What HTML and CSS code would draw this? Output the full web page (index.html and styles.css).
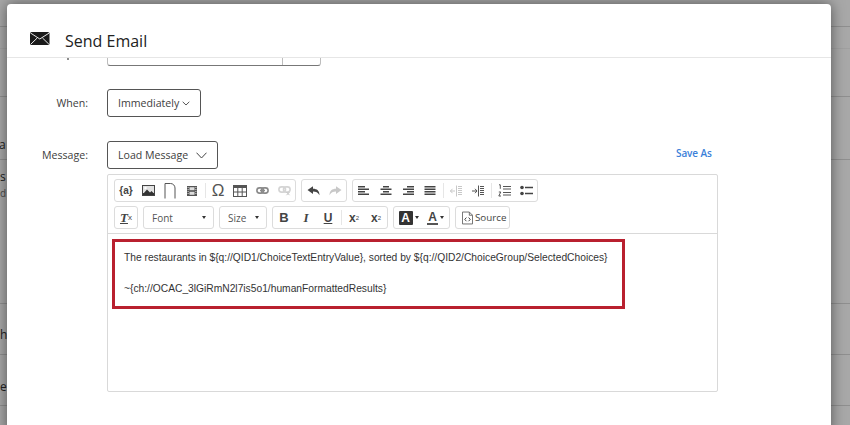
FILE: index.html
```html
<!DOCTYPE html>
<html lang="en">
<head>
<meta charset="utf-8">
<title>Send Email</title>
<link rel="stylesheet" href="styles.css">
</head>
<body>
<div class="backdrop" aria-hidden="true">
  <span class="line l1"></span><span class="line l2"></span><span class="line l3"></span><span class="line l4"></span><span class="line l5"></span><span class="line l6"></span><span class="line l7"></span>
  <span class="peek p1">a</span><span class="peek p2">s</span><span class="peek p3 dim">d</span><span class="peek p4">h</span><span class="peek p5">e</span>
</div>
<main class="modal">
  <header class="modal-head">
    <svg class="mail-icon" width="20" height="13" viewBox="0 0 20 13"><rect width="19.500" height="13" rx="1.600" fill="#1a1a1a"/><path d="M.5 1 9.800 7 19.200 1M.8 12.200l6.400-6.200M18.900 12.200l-6.400-6.200" fill="none" stroke="#fff" stroke-width=".9"/></svg>
    <h1 class="modal-title">Send Email</h1>
  </header>
  <div class="modal-body">
    <div class="row row-subject">
      <div class="label-slot"><span class="descender"></span></div>
      <div class="subject-field"><span class="subject-input"></span><span class="subject-btn"></span></div>
    </div>
    <div class="row row-when">
      <label class="label">When:</label>
      <button class="select select-when">Immediately<svg width="8" height="5" viewBox="0 0 8 5"><path d="M.7.8 4 4 7.300.8" fill="none" stroke="#444" stroke-width=".9"/></svg></button>
    </div>
    <div class="row row-message">
      <label class="label">Message:</label>
      <button class="select select-load">Load Message<svg width="11" height="7" viewBox="0 0 11 7"><path d="M.5.700 5.500 6 10.500.700" fill="none" stroke="#444" stroke-width="1"/></svg></button>
      <a class="save-as">Save As</a>
    </div>
    <section class="editor">
      <div class="toolbar">
        <div class="tb-row">
          <div class="group">
            <span class="tb tb-text">{a}</span>
            <span class="tb"><svg width="13" height="11" viewBox="0 0 13 11"><rect width="13" height="11" fill="#444"/><rect x="1" y="1" width="11" height="7" fill="#e2e2e2"/><path d="M1 9 5 4.500l3 3 1.500-1.500L12 8.500V10H1z" fill="#333"/><circle cx="3.500" cy="3" r="1.200" fill="#fff"/></svg></span>
            <span class="tb"><svg width="12" height="17" viewBox="0 0 12 17"><path d="M1 16.500V1.500h5.500C9 1.500 11 3.500 11 6v10.500" fill="none" stroke="#555" stroke-width="1"/></svg></span>
            <span class="tb"><svg width="12" height="12" viewBox="0 0 12 12"><rect x="1" y="1" width="10" height="10" fill="#555"/><rect x="3.500" y="2.200" width="5" height="3" fill="#ddd"/><rect x="3.500" y="6.800" width="5" height="3" fill="#ddd"/><path d="M1.600 2.500h1M1.600 4.500h1M1.600 6.500h1M1.600 8.500h1M9.400 2.500h1M9.400 4.500h1M9.400 6.500h1M9.400 8.500h1" stroke="#ddd"/></svg></span>
            <span class="sep"></span>
            <span class="tb tb-omega">Ω</span>
            <span class="tb"><svg width="14" height="12" viewBox="0 0 14 12"><rect x=".5" y=".5" width="13" height="11" fill="#fff" stroke="#555"/><rect width="14" height="3" fill="#555"/><path d="M4.800 3v8M9.200 3v8M1 7h12" stroke="#555"/></svg></span>
            <span class="tb"><svg width="13" height="7" viewBox="0 0 13 7"><rect x=".9" y=".9" width="6.600" height="5.200" rx="2.600" fill="none" stroke="#8a8a8a" stroke-width="1.600"/><rect x="5.500" y=".9" width="6.600" height="5.200" rx="2.600" fill="none" stroke="#8a8a8a" stroke-width="1.600"/><path d="M4 3.500h5" stroke="#8a8a8a" stroke-width="1.400"/></svg></span>
            <span class="tb"><svg width="13" height="10" viewBox="0 0 13 10"><rect x=".9" y=".9" width="6.600" height="5.200" rx="2.600" fill="none" stroke="#d4d4d4" stroke-width="1.600"/><rect x="5.500" y=".9" width="6.600" height="5.200" rx="2.600" fill="none" stroke="#d4d4d4" stroke-width="1.600"/><path d="m8.500 6 3 3.200M11.500 6l-3 3.200" stroke="#c4c4c4" stroke-width="1"/></svg></span>
          </div>
          <div class="group group-pad">
            <span class="tb"><svg width="13" height="10" viewBox="0 0 13 10"><path d="M.5 4 6 .3v2.500c4 0 6.500 2 6.500 6.500C11 6.500 9 5.600 6 5.600V8z" fill="#444"/></svg></span>
            <span class="tb"><svg width="13" height="10" viewBox="0 0 13 10"><path d="M12.500 4 7 .3v2.500c-4 0-6.500 2-6.500 6.500C2 6.500 4 5.600 7 5.600V8z" fill="#c8c8c8"/></svg></span>
          </div>
          <div class="group">
            <span class="tb"><svg class="lines" width="12" height="10" viewBox="0 0 12 10"><path d="M0 .75h7M0 3.250h11M0 5.750h7M0 8.250h11"/></svg></span>
            <span class="tb"><svg class="lines" width="12" height="10" viewBox="0 0 12 10"><path d="M3 .75h6M.5 3.250h11M3 5.750h6M.5 8.250h11"/></svg></span>
            <span class="tb"><svg class="lines" width="12" height="10" viewBox="0 0 12 10"><path d="M5 .75h7M1 3.250h11M5 5.750h7M1 8.250h11"/></svg></span>
            <span class="tb"><svg class="lines" width="12" height="10" viewBox="0 0 12 10"><path d="M.5 .75h11M.5 3.250h11M.5 5.750h11M.5 8.250h11"/></svg></span>
            <span class="sep"></span>
            <span class="tb"><svg class="thin faint" width="12" height="12" viewBox="0 0 12 12"><path d="M6.500 .5v11M8 1.500h4M8 3.500h4M8 5.500h4M8 7.500h4M8 9.500h4M0 6h5M2.500 3.800 .5 6l2 2.200"/></svg></span>
            <span class="tb"><svg class="thin" width="12" height="12" viewBox="0 0 12 12"><path d="M6.500 .5v11M8 1.500h4M8 3.500h4M8 5.500h4M8 7.500h4M8 9.500h4M0 6h5M3 3.800 5 6 3 8.200"/></svg></span>
            <span class="sep"></span>
            <span class="tb"><svg class="thin" width="13" height="13" viewBox="0 0 13 13"><path d="M5 2.500h8M5 5h8M5 8.500h8M5 11h8M1 .8h1.300v4M.8 8h2l-2 4h2.200" stroke-width=".9"/></svg></span>
            <span class="tb"><svg width="13" height="11" viewBox="0 0 13 11"><circle cx="2" cy="2.500" r="1.800" fill="#444"/><circle cx="2" cy="8.500" r="1.800" fill="#444"/><path d="M5 2.500h8M5 8.500h8" stroke="#444" stroke-width="1.400"/></svg></span>
          </div>
        </div>
        <div class="tb-row">
          <div class="group group-clear"><span class="tb tb-clear"><span class="ix">T</span><sub>x</sub></span></div>
          <div class="group combo combo-font"><span>Font</span><i class="caret"></i></div>
          <div class="group combo combo-size"><span>Size</span><i class="caret"></i></div>
          <div class="group">
            <span class="tb tb-b">B</span>
            <span class="tb tb-i">I</span>
            <span class="tb tb-u">U</span>
            <span class="sep"></span>
            <span class="tb tb-script">x<sub>2</sub></span>
            <span class="tb tb-script">x<sup>2</sup></span>
          </div>
          <div class="group group-color">
            <span class="tb tb-color"><span class="a-fill">A</span><i class="caret"></i></span>
            <span class="tb tb-color"><span class="a-line">A</span><i class="caret"></i></span>
          </div>
          <div class="group source">
            <svg width="11" height="14" viewBox="0 0 12 14"><path d="M.5.500h7.500l3.500 3.500v9.500H.5z" fill="#fff" stroke="#666"/><path d="M8 .5V4h3.500" fill="none" stroke="#666"/><path d="M4.800 6.500 3 8.500l1.800 2M7.200 6.500l1.800 2-1.800 2" fill="none" stroke="#333"/></svg>
            <span>Source</span>
          </div>
        </div>
      </div>
      <div class="content">
        <div class="highlight">
          <p class="para">The restaurants in ${q://QID1/ChoiceTextEntryValue}, sorted by ${q://QID2/ChoiceGroup/SelectedChoices}</p>
          <p class="para">~{ch://OCAC_3lGiRmN2l7is5o1/humanFormattedResults}</p>
        </div>
      </div>
    </section>
  </div>
</main>
</body>
</html>
```
FILE: styles.css
```css
* { box-sizing: border-box; }
html, body { margin: 0; height: 425px; overflow: hidden; }
body {
  position: relative;
  background: #a8a8a8;
  font-family: "Open Sans", sans-serif;
  color: #333;
  padding: 4px 19px 0 7px;
}
.backdrop { position: absolute; inset: 0; overflow: hidden; }
.line { position: absolute; left: 0; right: 0; height: 1px; background: #8f8f8f; }
.l1 { top: 26px; }
.l2 { top: 48px; background: #a0a0a0; }
.l3 { top: 96px; }
.l4 { top: 159px; }
.l5 { top: 303px; }
.l6 { top: 354px; }
.l7 { top: 405px; }
.peek { position: absolute; font-size: 12px; line-height: 14px; color: #222; }
.p1 { top: 138px; left: -1px; }
.p2 { top: 170px; left: 0; }
.p3 { top: 186px; left: 0; font-size: 10px; color: #4a4a4a; }
.p4 { top: 328px; left: 0; }
.p5 { top: 380px; left: 0; }

.modal {
  position: relative;
  height: 430px;
  background: #fff;
  border-radius: 4px 4px 0 0;
  box-shadow: 0 0 14px rgba(0, 0, 0, .5);
}
.modal-head {
  height: 54px;
  border-bottom: 1px solid #e6e6e6;
  display: flex;
  align-items: flex-start;
  padding: 26px 0 0 23px;
}
.mail-icon { display: block; margin-top: 2px; }
.modal-title {
  margin: 0 0 0 15px;
  font-size: 16px;
  font-weight: 400;
  line-height: 22px;
  color: #222;
}
.modal-body { height: 370px; overflow: hidden; }
.row { display: flex; align-items: center; }
.label {
  width: 81px;
  margin-right: 19px;
  text-align: right;
  font-size: 10.600px;
  color: #404040;
}
.label-slot {
  width: 100px;
  height: 28px;
  display: flex;
  align-items: flex-end;
  padding: 0 0 6px 60px;
}
.descender { width: 2px; height: 2px; background: #666; border-radius: 1px; }
.row-subject { height: 28px; margin-top: -20px; }
.row-when { margin-top: 23px; }
.row-message { margin-top: 24px; position: relative; }
.subject-field { display: flex; height: 28px; width: 214px; border: 1px solid #bdbdbd; border-bottom-color: #777; border-radius: 3px; }
.subject-input { flex: 1; }
.subject-btn { width: 38px; border-left: 1px solid #bdbdbd; }

.select {
  display: flex;
  align-items: center;
  justify-content: space-between;
  height: 28px;
  padding: 0 10px;
  border: 1px solid #555;
  border-radius: 3px;
  background: #fff;
  font: 400 10.600px "Open Sans", sans-serif;
  color: #404040;
  white-space: nowrap;
}
.select-when { width: 94px; }
.select-load { width: 111px; }
.save-as {
  position: absolute;
  left: 669px;
  top: 5px;
  font-size: 10px;
  letter-spacing: -.1px;
  font-weight: 600;
  color: #3b7fd9;
}

.editor {
  width: 611px;
  height: 218px;
  margin: 5px 0 0 100px;
  border: 1px solid #d9d9d9;
  border-radius: 2px;
}
.toolbar {
  height: 59px;
  border-bottom: 1px solid #d9d9d9;
  padding: 4px 0 0 6px;
  display: flex;
  flex-direction: column;
  gap: 4px;
}
.tb-row { display: flex; gap: 5px; }
.group {
  display: flex;
  align-items: center;
  height: 23px;
  border: 1px solid #dcdcdc;
  border-radius: 3px;
  background: #fff;
  color: #444;
  font-family: "Liberation Sans", sans-serif;
}
.tb {
  width: 22px;
  height: 21px;
  display: flex;
  align-items: center;
  justify-content: center;
  flex: none;
}
.tb-text { font: 700 10px "Liberation Sans", sans-serif; }
.tb-omega { font: 400 17px "Liberation Sans", sans-serif; color: #555; }
.sep { width: 1px; height: 15px; margin: 0 1.500px; background: #e6e6e6; flex: none; }
.lines path { stroke: #444; stroke-width: 1.500; fill: none; }
.thin path { stroke: #555; stroke-width: 1; fill: none; }
.faint path { stroke: #c8c8c8; }
.group-clear { width: 24px; justify-content: center; }
.tb-clear { font: italic 700 13px/14px "Liberation Serif", serif; }
.ix { text-decoration: underline; }
.tb-clear sub { font: 400 8px "Liberation Sans", sans-serif; vertical-align: -3px; }
.combo { justify-content: space-between; padding: 0 7px 0 8px; font: 400 10px "Open Sans", sans-serif; color: #555; }
.combo-font { width: 71px; }
.combo-size { width: 48px; }
.caret { width: 0; height: 0; border: 2.500px solid transparent; border-top: 3px solid #333; border-bottom: 0; flex: none; }
.tb-b { font: 700 13px "Liberation Sans", sans-serif; }
.tb-i { font: italic 700 13px "Liberation Serif", serif; }
.tb-u { font: 700 12px "Liberation Sans", sans-serif; text-decoration: underline; }
.tb-script { font: 700 12px "Liberation Sans", sans-serif; }
.tb-script sub, .tb-script sup { font-size: 6px; font-weight: 400; line-height: 0; }
.group-color { padding-left: 1px; }
.tb-color { width: 27px; gap: 2px; }
.a-fill {
  width: 14px;
  height: 14px;
  background: #333;
  color: #fff;
  font: 700 12px/14px "Liberation Sans", sans-serif;
  text-align: center;
  border-radius: 1px;
}
.a-line { font: 700 12px/12px "Liberation Sans", sans-serif; border-bottom: 2px solid #555; padding: 0 1px; }
.source {
  width: 55px;
  gap: 2px;
  padding-left: 6px;
  font: 400 9.800px "Open Sans", sans-serif;
  color: #444;
  white-space: nowrap;
}
.content { padding: 5px 0 0 4px; }
.highlight {
  width: 513px;
  height: 70px;
  border: 3px solid #b9202f;
  padding: 9px 0 0 9px;
  font: 400 10.250px/14px "Liberation Sans", sans-serif;
  color: #333;
}
.para { margin: 0 0 17px; white-space: nowrap; }
```
